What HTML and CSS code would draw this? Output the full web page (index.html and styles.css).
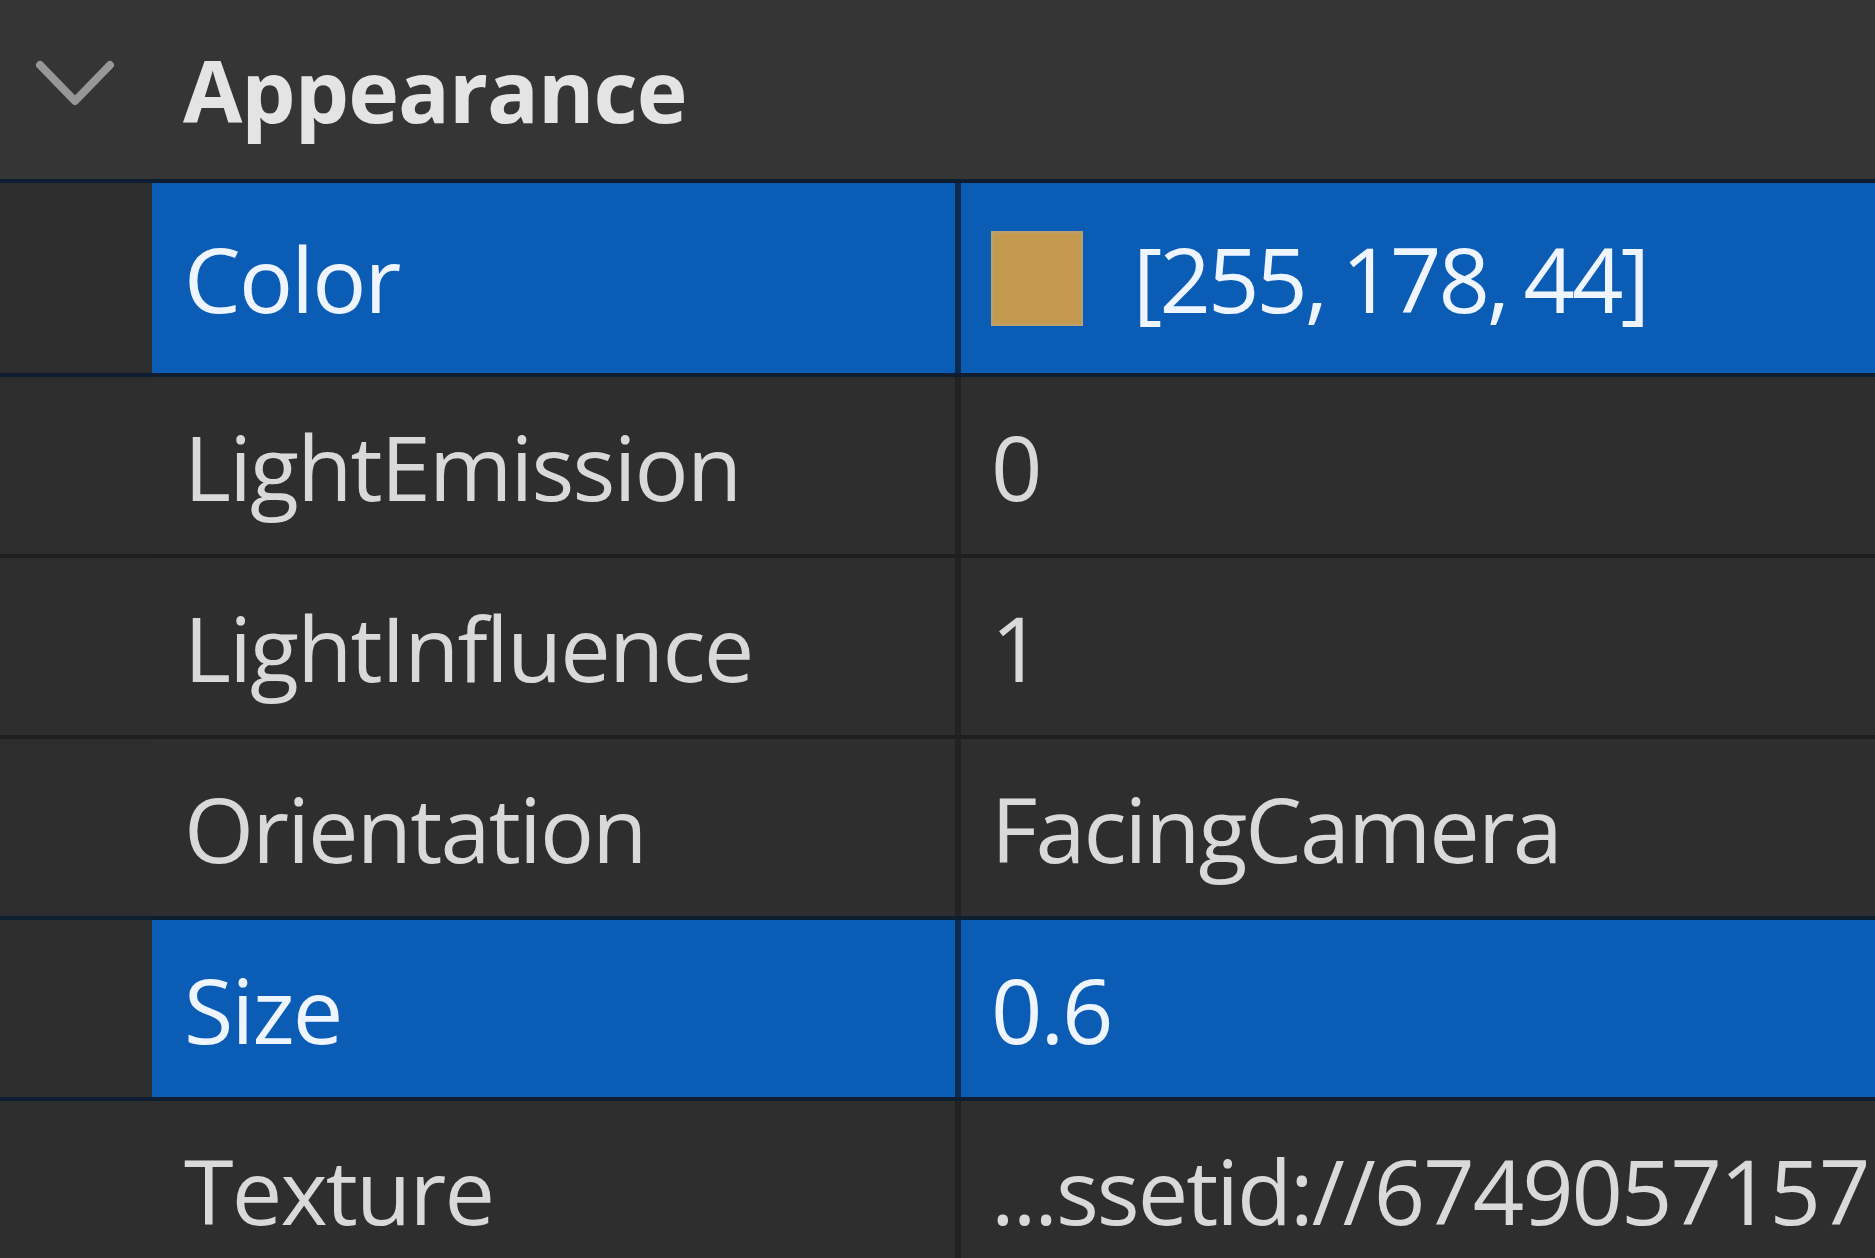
FILE: index.html
```html
<!DOCTYPE html>
<html lang="en">
<head>
<meta charset="utf-8">
<title>Properties - Appearance</title>
<link rel="stylesheet" href="styles.css">
</head>
<body>
<div class="panel">
  <div class="header">
    <svg class="chevron" width="152" height="179" viewBox="0 0 152 179">
      <polyline points="40,65 75,101 110,65" fill="none" stroke="#979797" stroke-width="8" stroke-linecap="round" stroke-linejoin="round"/>
    </svg>
    <span class="title">Appearance</span>
  </div>
  <div class="row row-tall selected">
    <div class="gutter"></div>
    <div class="name">Color</div>
    <div class="value"><span class="swatch"></span><span class="val-text tight">[255, 178, 44]</span></div>
  </div>
  <div class="row">
    <div class="gutter"></div>
    <div class="name">LightEmission</div>
    <div class="value"><span class="val-text">0</span></div>
  </div>
  <div class="row">
    <div class="gutter"></div>
    <div class="name">LightInfluence</div>
    <div class="value"><span class="val-text">1</span></div>
  </div>
  <div class="row">
    <div class="gutter"></div>
    <div class="name">Orientation</div>
    <div class="value"><span class="val-text">FacingCamera</span></div>
  </div>
  <div class="row selected">
    <div class="gutter"></div>
    <div class="name">Size</div>
    <div class="value"><span class="val-text">0.6</span></div>
  </div>
  <div class="row">
    <div class="gutter"></div>
    <div class="name">Texture</div>
    <div class="value"><span class="val-text">...ssetid://6749057157</span></div>
  </div>
</div>
</body>
</html>
```

FILE: styles.css
```css
html, body {
  margin: 0;
  padding: 0;
  background: #2e2e2e;
  overflow: hidden;
}

.panel {
  width: 1875px;
  height: 1258px;
  overflow: hidden;
  background: #2e2e2e;
  font-family: "Open Sans", "Noto Sans", sans-serif;
}

.header {
  height: 179px;
  background: #353535;
  display: flex;
  align-items: center;
}

.chevron {
  flex: 0 0 152px;
  display: block;
}

.title {
  margin-left: 31px;
  font-size: 86px;
  font-weight: 700;
  color: #e4e4e4;
  line-height: 1;
  letter-spacing: -1px;
}

.row {
  display: flex;
  flex: 0 0 auto;
  height: 177px;
  border-top: 4px solid #1f1f1f;
  background: #2e2e2e;
}

.row-tall {
  height: 190px;
}

.gutter {
  flex: 0 0 152px;
  background: #2d2d2d;
}

.name {
  flex: 0 0 803px;
  box-sizing: border-box;
  padding-left: 32px;
  display: flex;
  align-items: center;
  font-size: 90px;
  letter-spacing: -1.8px;
  color: #d9d9d9;
  line-height: 1;
  white-space: nowrap;
}

.value {
  flex: 1 1 auto;
  min-width: 0;
  box-sizing: border-box;
  border-left: 6px solid #222222;
  padding-left: 30px;
  display: flex;
  align-items: center;
  font-size: 90px;
  letter-spacing: -2px;
  color: #d9d9d9;
  line-height: 1;
  white-space: nowrap;
  overflow: hidden;
}

.selected {
  border-top-color: #0e1d30;
}

.selected + .row {
  border-top-color: #0e1d30;
}

.selected .name,
.selected .value {
  background: #0b5cb5;
  color: #eef5ff;
}

.selected .value {
  border-left-color: #0d2a4d;
}

.swatch {
  flex: 0 0 auto;
  width: 92px;
  height: 95px;
  box-sizing: border-box;
  background: #c39a4f;
  border: 2px solid #b8a16e;
  margin-right: 50px;
}

.val-text {
  display: block;
}

.tight {
  letter-spacing: -3px;
  word-spacing: -4px;
}
```
